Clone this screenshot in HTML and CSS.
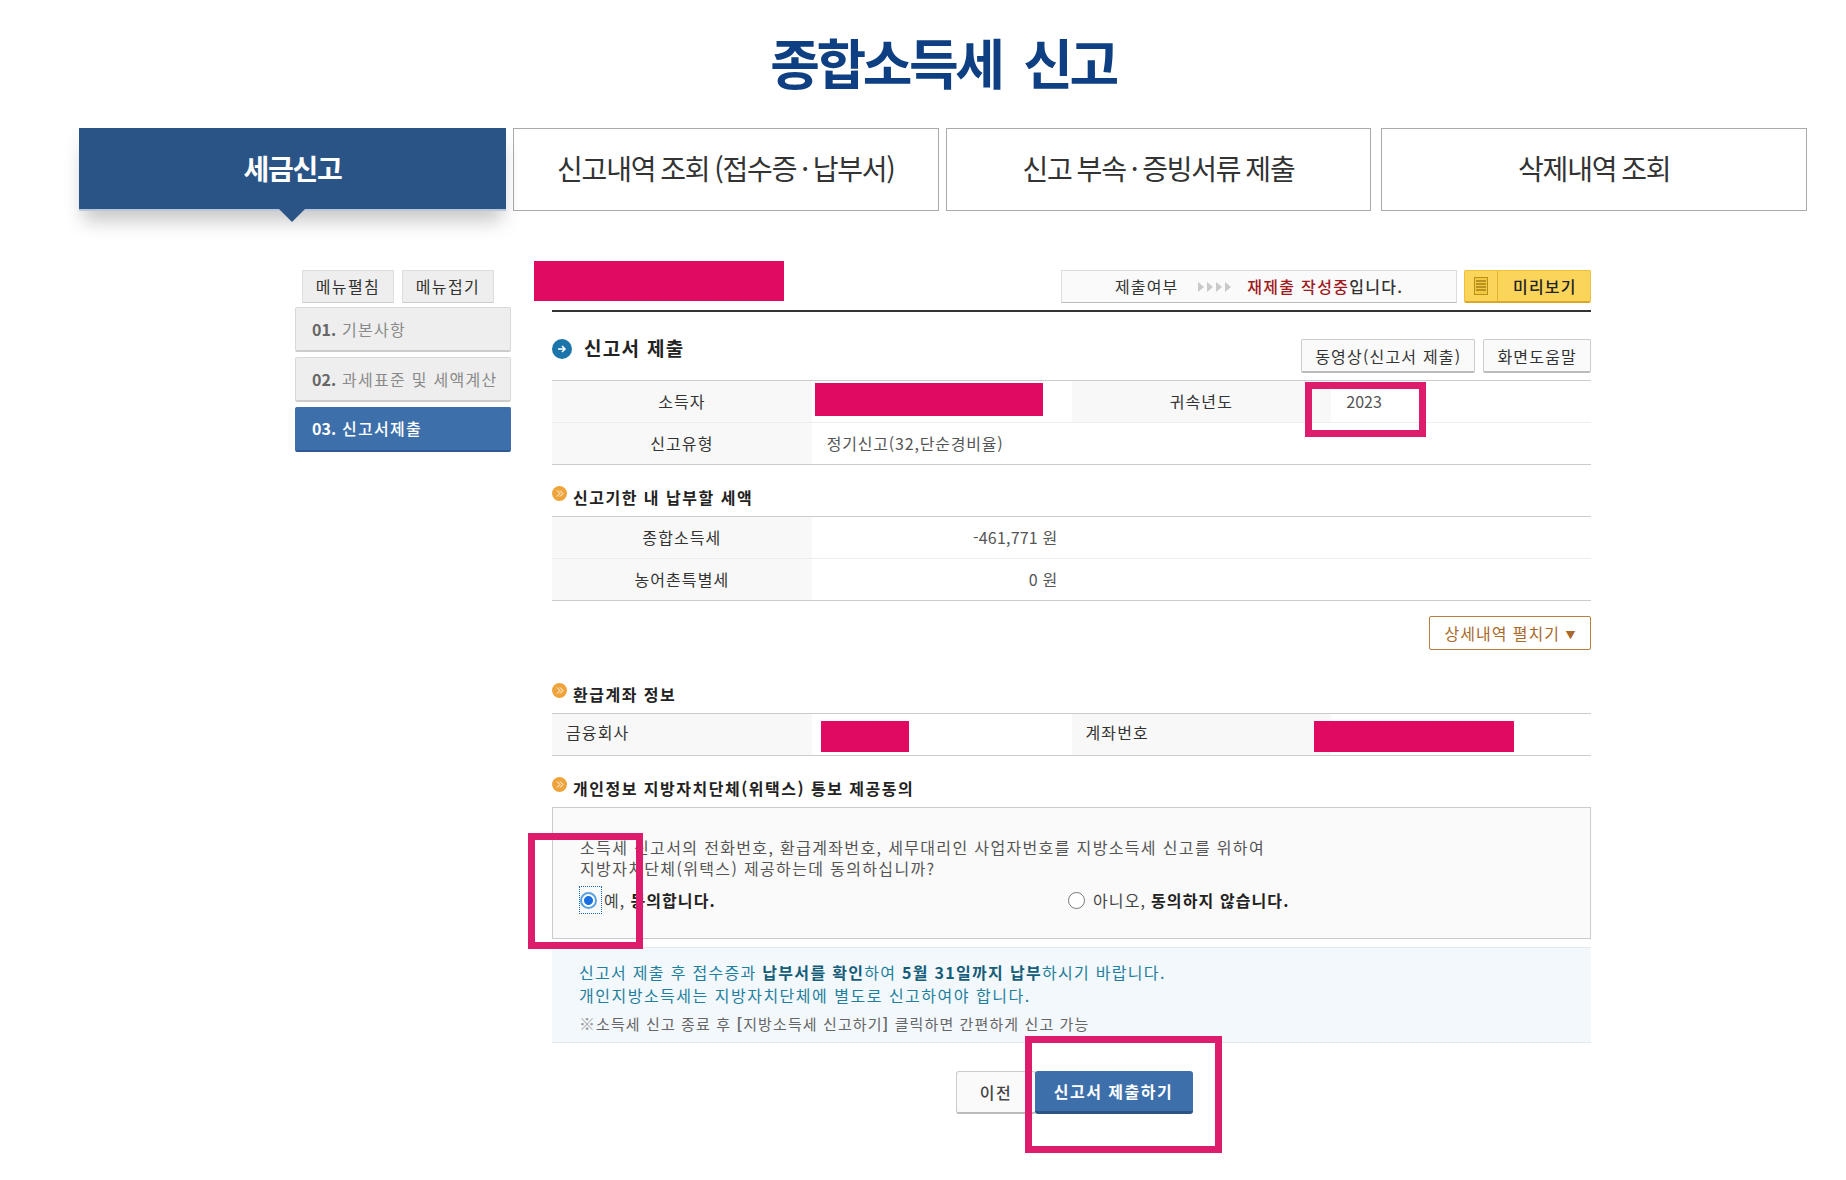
FILE: index.html
```html
<!DOCTYPE html>
<html lang="ko">
<head>
<meta charset="utf-8">
<title>종합소득세 신고</title>
<link rel="stylesheet" href="styles.css">
</head>
<body>
<div class="page">
  <h1 class="title">종합소득세 신고</h1>
  <nav class="tabs">
    <a class="tab active">세금신고</a>
    <a class="tab">신고내역 조회 (접수증 · 납부서)</a>
    <a class="tab">신고 부속 · 증빙서류 제출</a>
    <a class="tab">삭제내역 조회</a>
  </nav>
  <div class="content">
    <aside class="side">
      <div class="side-btns">
        <button class="side-btn">메뉴펼침</button>
        <button class="side-btn">메뉴접기</button>
      </div>
      <div class="side-item"><b>01.</b> 기본사항</div>
      <div class="side-item"><b>02.</b> 과세표준 및 세액계산</div>
      <div class="side-item current"><b>03.</b> 신고서제출</div>
    </aside>
    <main class="main">
      <div class="toolbar">
        <div class="redact redact-head"></div>
        <div class="status">제출여부<svg class="arrows" width="36" height="12" viewBox="0 0 36 12"><path d="M1 1l6 5-6 5zM10 1l6 5-6 5zM19 1l6 5-6 5zM28 1l6 5-6 5z" fill="#c9c9c9"/></svg><span class="status-text"><em>재제출 작성중</em>입니다.</span></div>
        <button class="preview">
          <span class="preview-icon"><svg width="14" height="18" viewBox="0 0 14 18"><rect x="0.5" y="0.5" width="13" height="17" fill="#f3c93f" stroke="#b98f1c"/><path d="M2 4h10M2 7h10M2 10h10M2 13h10" stroke="#a8801a" stroke-width="1.4"/></svg></span>
          <span class="preview-label">미리보기</span>
        </button>
      </div>

      <div class="title-row">
        <h2 class="sec-title">
          <svg class="sec-icon" width="20" height="20" viewBox="0 0 20 20"><circle cx="10" cy="10" r="10" fill="#1b75ab"/><path d="M6 10h7M10 7l3 3-3 3" stroke="#fff" stroke-width="1.6" fill="none"/></svg>
          <span class="sec-text">신고서 제출</span>
        </h2>
        <div class="title-btns">
          <button class="ghost-btn">동영상(신고서 제출)</button>
          <button class="ghost-btn">화면도움말</button>
        </div>
      </div>

      <table class="info">
        <tr>
          <th>소득자</th>
          <td><div class="redact redact-name"></div></td>
          <th>귀속년도</th>
          <td class="pad digits">2023</td>
        </tr>
        <tr>
          <th>신고유형</th>
          <td class="pad" colspan="3">정기신고(32,단순경비율)</td>
        </tr>
      </table>

      <h3 class="sub">
        <svg class="sub-icon" width="15" height="15" viewBox="0 0 15 15"><circle cx="7.5" cy="7.5" r="7.5" fill="#eea43a"/><path d="M5 4.5l3 3-3 3M8 4.5l3 3-3 3" stroke="#fff" stroke-width="1" fill="none"/></svg>
        신고기한 내 납부할 세액
      </h3>
      <table class="info">
        <tr><th>종합소득세</th><td class="num">-461,771 원</td><td colspan="2"></td></tr>
        <tr><th>농어촌특별세</th><td class="num">0 원</td><td colspan="2"></td></tr>
      </table>

      <div class="detail-row"><button class="detail-btn">상세내역 펼치기 <span class="caret">▼</span></button></div>

      <h3 class="sub sub-after">
        <svg class="sub-icon" width="15" height="15" viewBox="0 0 15 15"><circle cx="7.5" cy="7.5" r="7.5" fill="#eea43a"/><path d="M5 4.5l3 3-3 3M8 4.5l3 3-3 3" stroke="#fff" stroke-width="1" fill="none"/></svg>
        환급계좌 정보
      </h3>
      <table class="info">
        <tr>
          <th class="left">금융회사</th>
          <td><div class="redact redact-bank"></div></td>
          <th class="left">계좌번호</th>
          <td><div class="redact redact-acct"></div></td>
        </tr>
      </table>

      <h3 class="sub">
        <svg class="sub-icon" width="15" height="15" viewBox="0 0 15 15"><circle cx="7.5" cy="7.5" r="7.5" fill="#eea43a"/><path d="M5 4.5l3 3-3 3M8 4.5l3 3-3 3" stroke="#fff" stroke-width="1" fill="none"/></svg>
        개인정보 지방자치단체(위택스) 통보 제공동의
      </h3>
      <div class="consent">
        <p>소득세 신고서의 전화번호, 환급계좌번호, 세무대리인 사업자번호를 지방소득세 신고를 위하여<br>지방자치단체(위택스) 제공하는데 동의하십니까?</p>
        <div class="radios">
          <label class="radio-label"><span class="focus"><input type="radio" name="agree" checked></span>예, <b>동의합니다.</b></label>
          <label class="radio-label"><input type="radio" name="agree">아니오, <b>동의하지 않습니다.</b></label>
        </div>
      </div>
      <div class="notice">
        <p class="notice-main">신고서 제출 후 접수증과 <b>납부서를 확인</b>하여 <b>5월 31일까지 납부</b>하시기 바랍니다.<br><span class="notice-line">개인지방소득세는 지방자치단체에 별도로 신고하여야 합니다.</span></p>
        <p class="notice-sub"><span class="mark">※</span><span>소득세 신고 종료 후 <b>[</b>지방소득세 신고하기<b>]</b> 클릭하면 간편하게 신고 가능</span></p>
      </div>
      <div class="actions">
        <button class="prev">이전</button>
        <button class="submit">신고서 제출하기</button>
      </div>
    </main>
  </div>
  <div class="mark-box mark-year"></div>
  <div class="mark-box mark-radio"></div>
  <div class="mark-box mark-submit"></div>
</div>
</body>
</html>
```
FILE: styles.css
```css
* { box-sizing: border-box; }
html, body { margin: 0; padding: 0; background: #fff; }
body {
  font-family: "Noto Sans CJK KR", "Noto Sans", sans-serif;
  color: #333;
  font-size: 16px;
}
.page { position: relative; width: 1846px; height: 1180px; overflow: hidden; }
button { font-family: inherit; cursor: pointer; }

.title {
  margin: 0 39px 0 79px;
  height: 128px;
  padding-top: 26px;
  text-align: center;
  font-size: 54px;
  line-height: 72px;
  font-weight: 700;
  letter-spacing: -3.4px;
  word-spacing: 10px;
  color: #0d3f82;
}

.tabs { display: flex; gap: 7px; margin: 0 39px 0 79px; }
.tab {
  flex: 1;
  height: 83px;
  display: flex;
  align-items: center;
  justify-content: center;
  padding-bottom: 3px;
  border: 1px solid #aaa;
  font-size: 28px;
  letter-spacing: -1.2px;
  word-spacing: -1.7px;
  color: #333;
  font-weight: 400;
}
.tab:last-child { margin-left: 3px; }
.tab.active {
  position: relative;
  flex: 0 0 427px;
  padding-bottom: 1px;
  background: #2a5485;
  border: 0;
  border-bottom: 2px solid #b9c8dc;
  color: #fff;
  font-weight: 700;
  box-shadow: 0 14px 18px -4px rgba(0,0,0,.22);
}
.tab.active::after {
  content: "";
  position: absolute;
  left: 200px;
  top: 81px;
  border: 13px solid transparent;
  border-top-color: #2a5485;
  border-bottom: 0;
}

.content { display: flex; padding: 50px 0 0 295px; }
.side { width: 216px; padding-top: 9px; flex: none; }
.side-btns { display: flex; gap: 8px; padding-left: 7px; margin-bottom: 4px; }
.side-btn {
  width: 92px;
  height: 33px;
  padding: 0 0 2px;
  background: #eee;
  border: 1px solid #ddd;
  border-bottom-color: #ccc;
  font-size: 16px;
  letter-spacing: 1.4px;
  color: #333;
}
.side-item {
  height: 45px;
  margin-bottom: 5px;
  padding-left: 16px;
  line-height: 43px;
  background: #eee;
  border: 1px solid #d8d8d8;
  border-bottom: 2px solid #ccc;
  border-radius: 2px;
  font-size: 16px;
  letter-spacing: 1.3px;
  color: #8a8a8a;
  white-space: nowrap;
}
.side-item b { color: #666; letter-spacing: 0; }
.side-item.current {
  line-height: 41px;
  background: #3d6fab;
  border-color: #3d6fab;
  border-bottom-color: #2f5a90;
  color: #fff;
  font-weight: 500;
}
.side-item.current b { color: #fff; }

.main { width: 1039px; margin-left: 41px; flex: none; }
.redact { background: #e00a62; }
.toolbar {
  display: flex;
  height: 51px;
  padding-top: 9px;
  border-bottom: 2px solid #333;
}
.redact-head { width: 250px; height: 40px; margin: -9px 0 0 -18px; }
.status {
  display: flex;
  align-items: center;
  width: 396px;
  height: 33px;
  margin-left: auto;
  padding: 0 0 2px 53px;
  background: #fafafa;
  border: 1px solid #ddd;
  border-bottom-color: #bbb;
  letter-spacing: 1.1px;
  white-space: nowrap;
}
.arrows { margin: 2px 14px 0 19px; flex: none; }
.status-text { font-weight: 500; letter-spacing: 1.3px; }
.status em { font-style: normal; color: #a01a22; }
.preview {
  display: flex;
  width: 127px;
  height: 33px;
  margin-left: 7px;
  padding: 0;
  background: #fbd45a;
  border: 1px solid #eebf3e;
  border-bottom: 2px solid #d8a92b;
  border-radius: 2px;
  align-items: center;
  color: #222;
}
.preview-icon {
  display: flex;
  width: 33px;
  height: 100%;
  align-items: center;
  justify-content: center;
  border-right: 1px solid #e0b235;
}
.preview-label { margin-left: 15px; font-size: 16px; font-weight: 500; letter-spacing: 1.2px; }

.title-row { display: flex; justify-content: space-between; height: 68px; padding-top: 27px; }
.sec-title {
  display: flex;
  align-items: center;
  gap: 12px;
  height: 20px;
  margin: 0;
  font-size: 19px;
  font-weight: 700;
  letter-spacing: 1.3px;
  color: #222;
}
.sec-text { margin-top: -3px; }
.title-btns { display: flex; gap: 8px; }
.ghost-btn {
  height: 34px;
  padding: 0 13px;
  background: #fafafa;
  border: 1px solid #ccc;
  border-bottom: 2px solid #bbb;
  border-radius: 2px;
  font-size: 16px;
  letter-spacing: 1.2px;
  color: #333;
}

.info {
  width: 100%;
  table-layout: fixed;
  border-collapse: collapse;
  border-top: 1px solid #ccc;
  border-bottom: 1px solid #ccc;
}
.info tr { height: 42px; }
.info tr + tr { border-top: 1px solid #eee; }
.info th, .info td { padding: 0 0 2px; font-size: 16px; letter-spacing: .8px; }
.info th { background: #f8f8f8; font-weight: 400; color: #333; letter-spacing: 1.1px; }
.info th.left { padding: 0 0 6px 14px; text-align: left; }
.info td { color: #555; }
.info td.pad { padding-left: 15px; }
.info td.digits { letter-spacing: 0; }
.info td.num { padding-right: 14px; text-align: right; letter-spacing: .2px; }
.redact-name { width: 228px; height: 33px; margin: 0 0 2px 3px; }
.redact-bank { width: 88px; height: 31px; margin: 4px 0 -2px 9px; }
.redact-acct { width: 200px; height: 31px; margin: 4px 0 -2px -17px; }

.sub {
  display: flex;
  gap: 6px;
  height: 51px;
  margin: 0;
  padding-top: 21px;
  font-size: 16px;
  line-height: 22px;
  font-weight: 700;
  letter-spacing: 1.5px;
  color: #222;
}
.sub-after { height: 63px; padding-top: 33px; }
.sub-icon { flex: none; }
.detail-row { display: flex; justify-content: flex-end; padding-top: 15px; }
.detail-btn {
  width: 162px;
  height: 34px;
  padding: 0;
  background: #fff;
  border: 1px solid #b9803f;
  border-radius: 2px;
  font-size: 16px;
  letter-spacing: 1px;
  color: #a9692a;
}
.caret { font-size: 10px; letter-spacing: 0; vertical-align: 1px; }

.consent {
  height: 132px;
  padding: 29px 27px 0;
  background: #fafafa;
  border: 1px solid #ccc;
}
.consent p { margin: 0; font-size: 16px; line-height: 21px; letter-spacing: 1.35px; color: #555; }
.radios { display: grid; grid-template-columns: 488px auto; margin-top: 8px; }
.radio-label { display: flex; align-items: center; height: 26px; font-size: 16px; letter-spacing: 1.1px; color: #444; }
.radio-label b { margin-left: 5px; font-weight: 700; color: #222; }
.radio-label input {
  appearance: none;
  width: 17px;
  height: 17px;
  margin: 0 8px 0 0;
  flex: none;
  background: #fff;
  border: 1px solid #777;
  border-radius: 50%;
}
.radio-label input:checked {
  border: 2px solid #5aa3e0;
  background: radial-gradient(circle, #1a6fe0 0 4px, #fff 5px);
}
.focus { display: flex; align-items: center; width: 21px; height: 26px; margin-right: 3px; outline: 1px dotted #1a66b5; }
.radio-label .focus input { width: 17px; height: 17px; margin: 0; }

.notice {
  height: 96px;
  margin-top: 8px;
  padding: 13px 27px 0;
  background: #f3f8fc;
  border-top: 1px solid #e4e9ee;
  border-bottom: 1px solid #e4e9ee;
}
.notice p { margin: 0; }
.notice-main { font-size: 16px; line-height: 22.5px; letter-spacing: 1.3px; color: #1f7f9c; }
.notice-main b { color: #155d78; font-weight: 700; }
.notice-line { letter-spacing: 1.5px; }
.notice .notice-sub { display: flex; align-items: baseline; margin-top: 7px; font-size: 15px; line-height: 20px; letter-spacing: 1.1px; color: #666; }
.mark { flex: none; margin-right: 1px; color: #999; font-size: 16px; letter-spacing: 0; }

.actions { display: flex; justify-content: center; padding: 28px 0 0 0; margin-left: 5px; }
.prev {
  width: 80px;
  height: 43px;
  padding: 0 0 0 1px;
  margin-right: -1px;
  background: #fafafa;
  border: 1px solid #ccc;
  border-bottom: 2px solid #bbb;
  border-radius: 3px;
  font-size: 16px;
  font-weight: 500;
  letter-spacing: 1.5px;
  color: #444;
}
.submit {
  width: 158px;
  height: 43px;
  padding: 0;
  background: #3d6fab;
  border: 0;
  border-bottom: 3px solid #2b5587;
  border-radius: 3px;
  font-size: 16px;
  font-weight: 700;
  letter-spacing: 1.5px;
  color: #fff;
}

.mark-box { position: absolute; border: 7px solid #dd1c6d; }
.mark-year { left: 1305px; top: 382px; width: 121px; height: 55px; }
.mark-radio { left: 528px; top: 833px; width: 115px; height: 116px; }
.mark-submit { left: 1025px; top: 1036px; width: 197px; height: 117px; }
```
